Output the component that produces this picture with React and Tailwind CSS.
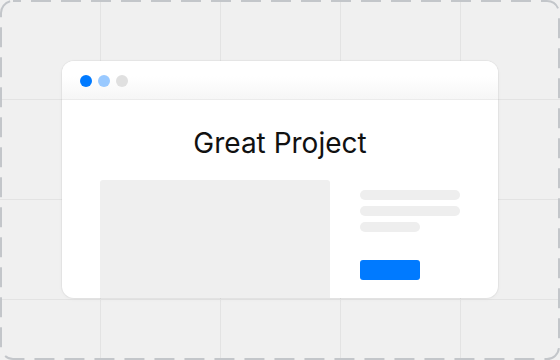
export default function App() {
  return (
    <div
      className="relative w-[560px] h-[360px] overflow-hidden bg-[#f0f0f0] bg-[linear-gradient(to_right,#e3e3e3_1px,transparent_1px),linear-gradient(to_bottom,#e3e3e3_1px,transparent_1px)] bg-[size:120px_100px] bg-[position:100px_99px] flex justify-center pt-[61px]"
      style={{ fontFamily: 'Inter, "Noto Sans", sans-serif' }}
    >
      {/* dashed frame */}
      <svg className="absolute inset-0 pointer-events-none" width="560" height="360">
        <rect
          x="1"
          y="1"
          width="558"
          height="358"
          rx="12"
          fill="none"
          stroke="#c3c6ca"
          strokeWidth="2"
          strokeDasharray="20 10"
          strokeDashoffset="12"
        />
      </svg>

      {/* browser window */}
      <div className="w-[436px] h-[237px] bg-white rounded-[12px] overflow-hidden flex flex-col shadow-[0_0_0_1px_rgba(0,0,0,0.035),0_1px_4px_rgba(0,0,0,0.04)]">
        <div className="h-[39px] shrink-0 flex items-center gap-[6px] pl-[18px] pt-[1px] border-b border-[#ebebeb] bg-[linear-gradient(to_bottom,#ffffff_40%,#f6f6f6)]">
          <span className="w-[12px] h-[12px] rounded-full bg-[#007aff]" />
          <span className="w-[12px] h-[12px] rounded-full bg-[#99c9ff]" />
          <span className="w-[12px] h-[12px] rounded-full bg-[#e0e0e0]" />
        </div>

        <div className="flex-1 flex flex-col items-center pt-[26px]">
          <h1 className="text-[28px] leading-[34px] font-normal text-[#111]">Great Project</h1>

          <div className="flex-1 w-full flex gap-[30px] px-[38px] mt-[20px]">
            <div className="w-[230px] bg-[#efefef] rounded-t-[3px]" />
            <div className="w-[100px] flex flex-col pt-[10px]">
              <div className="h-[10px] w-[100px] rounded-full bg-[#eeeeee]" />
              <div className="h-[10px] w-[100px] rounded-full bg-[#eeeeee] mt-[6px]" />
              <div className="h-[10px] w-[60px] rounded-full bg-[#eeeeee] mt-[6px]" />
              <div className="h-[20px] w-[60px] rounded-[3px] bg-[#007aff] mt-[28px]" />
            </div>
          </div>
        </div>
      </div>
    </div>
  );
}
